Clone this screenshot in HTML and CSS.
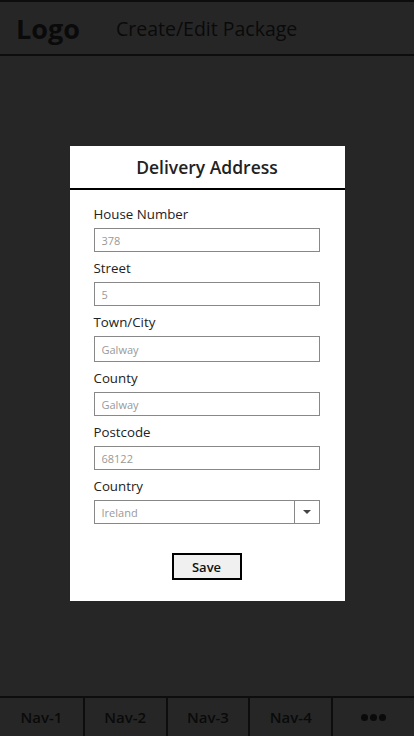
FILE: index.html
```html
<!DOCTYPE html>
<html lang="en">
<head>
    <meta charset="UTF-8">
    <meta name="viewport" content="width=device-width, initial-scale=1.0">
    <title>Create/Edit Package</title>
    <link rel="stylesheet" href="styles.css">
</head>
<body>
    <header class="topbar">
        <div class="logo">Logo</div>
        <div class="page-title">Create/Edit Package</div>
    </header>

    <main class="content"></main>

    <nav class="bottom-nav">
        <a class="nav-item">Nav-1</a>
        <a class="nav-item">Nav-2</a>
        <a class="nav-item">Nav-3</a>
        <a class="nav-item">Nav-4</a>
        <a class="nav-item nav-more"><span></span><span></span><span></span></a>
    </nav>

    <div class="overlay">
        <section class="modal">
            <h2 class="modal-title">Delivery Address</h2>
            <form class="modal-body">
                <label class="field">
                    <span class="field-label">House Number</span>
                    <input type="text" placeholder="378">
                </label>
                <label class="field">
                    <span class="field-label">Street</span>
                    <input type="text" placeholder="5">
                </label>
                <label class="field field-tall">
                    <span class="field-label">Town/City</span>
                    <input type="text" placeholder="Galway">
                </label>
                <label class="field">
                    <span class="field-label">County</span>
                    <input type="text" placeholder="Galway">
                </label>
                <label class="field">
                    <span class="field-label">Postcode</span>
                    <input type="text" placeholder="68122">
                </label>
                <label class="field">
                    <span class="field-label">Country</span>
                    <div class="select">
                        <span class="select-value">Ireland</span>
                        <span class="select-arrow"></span>
                    </div>
                </label>
                <div class="actions">
                    <button type="button" class="save-btn">Save</button>
                </div>
            </form>
        </section>
    </div>
</body>
</html>
```

FILE: styles.css
```css
* {
    margin: 0;
    padding: 0;
    box-sizing: border-box;
}

body {
    font-family: 'Open Sans', 'Liberation Sans', sans-serif;
    background-color: #262626;
    color: #0d0d0d;
    width: 414px;
    height: 736px;
    display: flex;
    flex-direction: column;
    overflow: hidden;
}

.topbar {
    height: 56px;
    border-top: 2px solid #0d0d0d;
    border-bottom: 2px solid #0d0d0d;
    display: flex;
    align-items: center;
    padding-left: 16px;
}

.logo {
    font-size: 27px;
    font-weight: 700;
    width: 100px;
    color: #0a0a0a;
}

.page-title {
    font-size: 19.5px;
    color: #0a0a0a;
}

.content {
    flex: 1;
}

.bottom-nav {
    height: 40px;
    border-top: 2px solid #0d0d0d;
    display: grid;
    grid-template-columns: repeat(5, 1fr);
}

.nav-item {
    display: flex;
    align-items: center;
    justify-content: center;
    font-size: 15px;
    font-weight: 600;
    color: #0a0a0a;
    border-left: 2px solid #0d0d0d;
}

.nav-item:first-child {
    border-left: none;
}

.nav-more {
    gap: 2px;
}

.nav-more span {
    width: 7px;
    height: 7px;
    border-radius: 50%;
    background-color: #0a0a0a;
}

.overlay {
    position: fixed;
    top: 0;
    left: 0;
    right: 0;
    bottom: 0;
    display: flex;
    justify-content: center;
    align-items: flex-start;
    padding-top: 146px;
}

.modal {
    width: 275px;
    background-color: #ffffff;
}

.modal-title {
    height: 44px;
    border-bottom: 2px solid #000;
    font-size: 17.5px;
    font-weight: 600;
    color: #222;
    text-align: center;
    line-height: 42px;
}

.modal-body {
    padding: 14px 25px 21px 24px;
}

.field {
    display: block;
    margin-bottom: 6px;
}

.field-label {
    display: block;
    font-size: 13.3px;
    line-height: 20px;
    color: #222;
    margin-bottom: 4px;
}

.field input,
.select {
    display: block;
    width: 100%;
    height: 24px;
    border: 1px solid #888;
    background-color: #fff;
    font-family: inherit;
    font-size: 11px;
    padding: 0 7px;
    color: #999;
    outline: none;
}

.field-tall input {
    height: 26px;
}

.field input::placeholder {
    color: #999;
}

.select {
    display: flex;
    align-items: center;
    padding-right: 0;
}

.select-value {
    flex: 1;
}

.select-arrow {
    width: 25px;
    height: 100%;
    border-left: 1px solid #888;
    display: flex;
    align-items: center;
    justify-content: center;
}

.select-arrow::after {
    content: '';
    border-left: 4px solid transparent;
    border-right: 4px solid transparent;
    border-top: 4px solid #444;
}

.actions {
    display: flex;
    justify-content: center;
    margin-top: 29px;
}

.save-btn {
    width: 70px;
    height: 27px;
    border: 2px solid #000;
    background-color: #f0f0f0;
    font-family: inherit;
    font-size: 13px;
    font-weight: 600;
    color: #111;
}
```
